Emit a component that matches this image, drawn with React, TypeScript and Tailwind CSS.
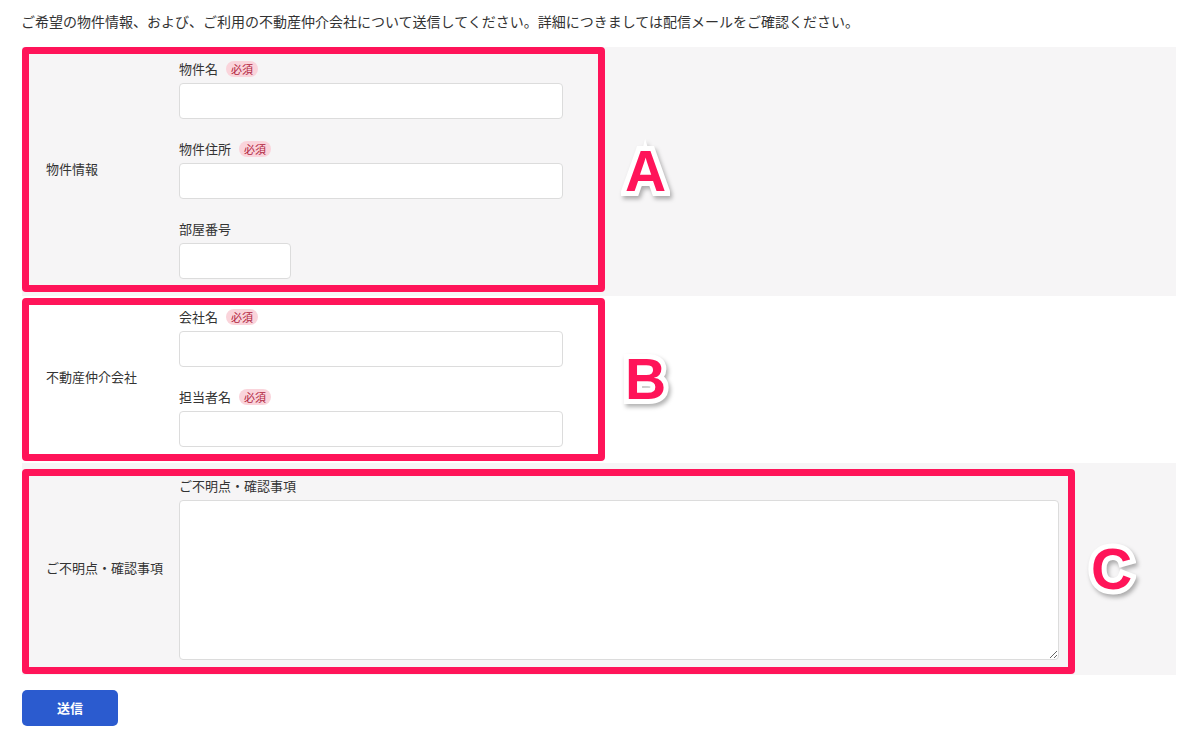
import React from "react";

function Badge() {
  return (
    <span className="ml-2 inline-flex h-4 items-center rounded-full bg-[#fad4db] px-[5px] text-[11px] leading-4 text-[#b0233d]">
      必須
    </span>
  );
}

function Field(props: { label: string; required?: boolean; width: string; last?: boolean }) {
  return (
    <div className={props.last ? "" : "mb-5"}>
      <div className="mb-1 flex h-5 items-center text-[13px] leading-5">
        {props.label}
        {props.required && <Badge />}
      </div>
      <input
        type="text"
        className={`block h-9 ${props.width} rounded-[4px] border border-[#dcdcdc] bg-white px-2 text-[13px] outline-none`}
      />
    </div>
  );
}

function Marker(props: { children: React.ReactNode; className?: string }) {
  return (
    <span
      className={`font-['Liberation_Sans',Arial,sans-serif] text-[57px] leading-none font-bold text-[#ff1459] [-webkit-text-stroke:10px_#fff] [paint-order:stroke_fill] drop-shadow-[2px_3px_2px_rgba(0,0,0,0.3)] ${props.className ?? ""}`}
    >
      {props.children}
    </span>
  );
}

export default function App() {
  return (
    <div className="min-h-screen bg-white font-['Noto_Sans_CJK_JP',sans-serif] text-[#333]">
      <div className="pt-[11px] pl-[21px]">
        <p className="text-[14px] leading-5">
          ご希望の物件情報、および、ご利用の不動産仲介会社について送信してください。詳細につきましては配信メールをご確認ください。
        </p>
      </div>

      <div className="mt-4 ml-[22px] w-[1154px]">
        {/* A: 物件情報 */}
        <div className="flex items-center bg-[#f6f5f6]">
          <div className="mb-1 flex rounded-[4px] border-[7px] border-[#ff1459] pt-[5px] pr-[35px] pb-[6px]">
            <div className="flex w-[150px] items-center pl-[17px] text-[13px]">物件情報</div>
            <div>
              <Field label="物件名" required width="w-[384px]" />
              <Field label="物件住所" required width="w-[384px]" />
              <Field label="部屋番号" width="w-[112px]" last />
            </div>
          </div>
          <Marker className="ml-5">A</Marker>
        </div>

        {/* B: 不動産仲介会社 */}
        <div className="flex items-center bg-white">
          <div className="mt-[2px] mb-[2px] flex rounded-[4px] border-[7px] border-[#ff1459] pt-[2px] pr-[35px] pb-[7px]">
            <div className="flex w-[150px] items-center pl-[17px] text-[13px]">不動産仲介会社</div>
            <div>
              <Field label="会社名" required width="w-[384px]" />
              <Field label="担当者名" required width="w-[384px]" last />
            </div>
          </div>
          <Marker className="ml-5">B</Marker>
        </div>

        {/* C: ご不明点・確認事項 */}
        <div className="flex items-center bg-[#f6f5f6]">
          <div className="mt-[6px] mb-[1px] flex rounded-[4px] border-[7px] border-[#ff1459] pr-[9px] pb-[7px]">
            <div className="flex w-[150px] items-center pl-[17px] text-[13px]">ご不明点・確認事項</div>
            <div>
              <div className="mb-1 flex h-5 items-center text-[13px] leading-5">ご不明点・確認事項</div>
              <textarea className="block h-[160px] w-[880px] rounded-[4px] border border-[#dcdcdc] bg-white p-2 text-[13px] outline-none" />
            </div>
          </div>
          <Marker className="ml-4">C</Marker>
        </div>
      </div>

      <div className="mt-[15px] ml-[22px]">
        <button
          type="button"
          className="h-9 w-24 rounded-[5px] bg-[#2b5bcf] text-[13px] font-bold text-white"
        >
          送信
        </button>
      </div>
    </div>
  );
}
